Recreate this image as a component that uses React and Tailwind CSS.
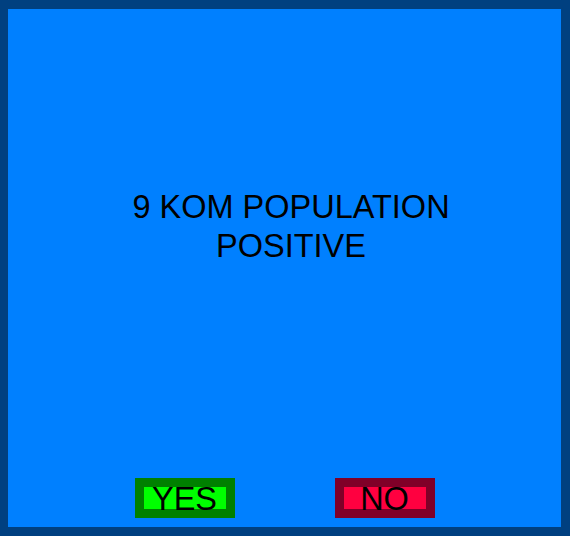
import React from 'react';

const ChoiceButton = ({ label, frame, fill }) => (
  <div
    className={`w-[100px] h-[40px] border-[9px] ${frame} ${fill} flex items-center justify-center`}
  >
    <span className="text-[32.5px] leading-[36px] pt-[1px] text-black whitespace-nowrap">{label}</span>
  </div>
);

const App = () => {
  return (
    <div
      className="w-[570px] h-[536px] bg-[#004080] pl-[8px] pr-[9px] pt-[9px] pb-[9px]"
      style={{ fontFamily: '"Liberation Sans", Arial, sans-serif' }}
    >
      <div className="h-full bg-[#0080ff] flex flex-col">
        {/* Question */}
        <div className="pt-[179px] pl-[13px] flex justify-center">
          <p className="w-[360px] text-center text-[32.5px] leading-[39px] text-black">
            9 KOM POPULATION POSITIVE
          </p>
        </div>

        <div className="flex-1" />

        {/* Answers */}
        <div className="flex justify-center gap-[100px] pb-[9px]">
          <ChoiceButton label="YES" frame="border-[#008000]" fill="bg-[#00ff00]" />
          <ChoiceButton label="NO" frame="border-[#800028]" fill="bg-[#ff0040]" />
        </div>
      </div>
    </div>
  );
};

export default App;
